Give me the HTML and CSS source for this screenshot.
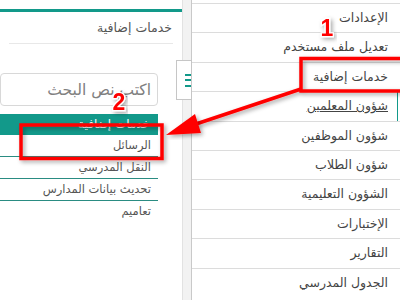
FILE: index.html
```html
<!DOCTYPE html>
<html lang="ar" dir="rtl">
<head>
    <meta charset="UTF-8">
    <title>خدمات إضافية</title>
    <link rel="stylesheet" href="styles.css">
</head>
<body>
    <div class="page">
        <nav class="menu">
            <ul>
                <li>الإعدادات</li>
                <li>تعديل ملف مستخدم</li>
                <li>خدمات إضافية</li>
                <li class="active"><span>شؤون المعلمين</span></li>
                <li>شؤون الموظفين</li>
                <li>شؤون الطلاب</li>
                <li>الشؤون التعليمية</li>
                <li>الإختبارات</li>
                <li>التقارير</li>
                <li>الجدول المدرسي</li>
            </ul>
        </nav>
        <div class="gutter">
            <button class="toggle"><i></i><i></i><i></i></button>
        </div>
        <section class="card">
            <div class="card-head">خدمات إضافية</div>
            <div class="card-body">
                <input type="text" class="search" placeholder="اكتب نص البحث">
                <div class="list-head">خدمات إضافية</div>
                <div class="row">الرسائل</div>
                <div class="row">النقل المدرسي</div>
                <div class="row">تحديث بيانات المدارس</div>
                <div class="row last">تعاميم</div>
            </div>
        </section>
    </div>

    <!-- annotations drawn over the screenshot -->
    <svg class="marks" width="400" height="300" viewBox="0 0 400 300">
        <defs>
            <filter id="shade" x="-20%" y="-20%" width="140%" height="140%">
                <feDropShadow dx="2" dy="2" stdDeviation="2" flood-color="#000" flood-opacity="0.35"/>
            </filter>
        </defs>
        <g filter="url(#shade)" fill="none" stroke="#f00" stroke-width="3.5">
            <rect x="301" y="58.5" width="120" height="32.5"/>
            <rect x="21" y="125" width="141" height="33.5"/>
            <line x1="301" y1="89" x2="196" y2="124"/>
        </g>
        <polygon filter="url(#shade)" fill="#f00" points="166,135 201,133 195,114"/>
        <text class="num" x="327" y="36">1</text>
        <text class="num" x="119" y="110">2</text>
    </svg>
</body>
</html>
```

FILE: styles.css
```css
html, body {
    margin: 0;
    height: 300px;
    overflow: hidden;
}

body {
    font-family: "DejaVu Sans", "Noto Sans", sans-serif;
    background-color: #fff;
    color: #444;
    position: relative;
}

.page {
    display: flex;
    height: 300px;
}

/* right side menu */
.menu {
    width: 208px;
    flex-shrink: 0;
}

.menu ul {
    list-style: none;
    margin: 3px 0 0;
    padding: 0;
}

.menu li {
    height: 28.4px;
    line-height: 28.4px;
    border-top: 1px solid #dcdcdc;
    padding-right: 12px;
    font-size: 12.5px;
    color: #444;
}

.menu li.active {
    box-shadow: inset -2px 0 0 #fff, inset -3px 0 0 #12998a;
}

.menu li.active span {
    text-decoration: underline;
}

/* thin strip between panels */
.gutter {
    width: 8px;
    flex-shrink: 0;
    background-color: #f2f2f2;
    border-left: 1px solid #e2e2e2;
    border-right: 1px solid #c9c9c9;
    position: relative;
}

.toggle {
    position: absolute;
    top: 60px;
    right: -1px;
    width: 16px;
    height: 40px;
    padding: 0;
    border: 1px solid #c6c6c6;
    background-color: #fff;
    display: flex;
    flex-direction: column;
    align-items: flex-start;
    justify-content: center;
    gap: 3.5px;
}

.toggle i {
    display: block;
    width: 6px;
    height: 2px;
    background-color: #12998a;
}

/* left card */
.card {
    flex: 1;
    margin-top: 9px;
    border-top: 3px solid #12998a;
    background-color: #fff;
}

.card-head {
    margin: 0 9px;
    padding-right: 1px;
    height: 31px;
    line-height: 31px;
    border-bottom: 1px solid #e8e8e8;
    font-size: 12.5px;
    color: #555;
}

.card-body {
    padding: 29px 24px 0 0;
}

.search {
    display: block;
    box-sizing: border-box;
    width: 100%;
    height: 33px;
    margin: 0;
    border: 1px solid #d8d8d8;
    border-radius: 4px;
    padding: 0 6px 0 0;
    font-family: "DejaVu Sans", sans-serif;
    font-size: 15.5px;
    outline: 0;
}

.search::placeholder {
    color: #808080;
}

.list-head {
    margin-top: 8px;
    height: 21px;
    line-height: 21px;
    padding-right: 8px;
    background-color: #12998a;
    color: #fff;
    font-size: 12px;
}

.row {
    height: 21px;
    line-height: 21px;
    padding-right: 7px;
    border-bottom: 1px solid #2a8c82;
    font-size: 11.5px;
    color: #555;
}

.row.last {
    border-bottom: 0;
}

.marks {
    position: absolute;
    top: 0;
    left: 0;
    pointer-events: none;
}

.num {
    font-family: "Liberation Sans", Arial, sans-serif;
    font-weight: bold;
    font-size: 23px;
    fill: #f00;
    stroke: #fff;
    stroke-width: 2.5px;
    paint-order: stroke;
    text-anchor: middle;
    filter: url(#shade);
}
```
